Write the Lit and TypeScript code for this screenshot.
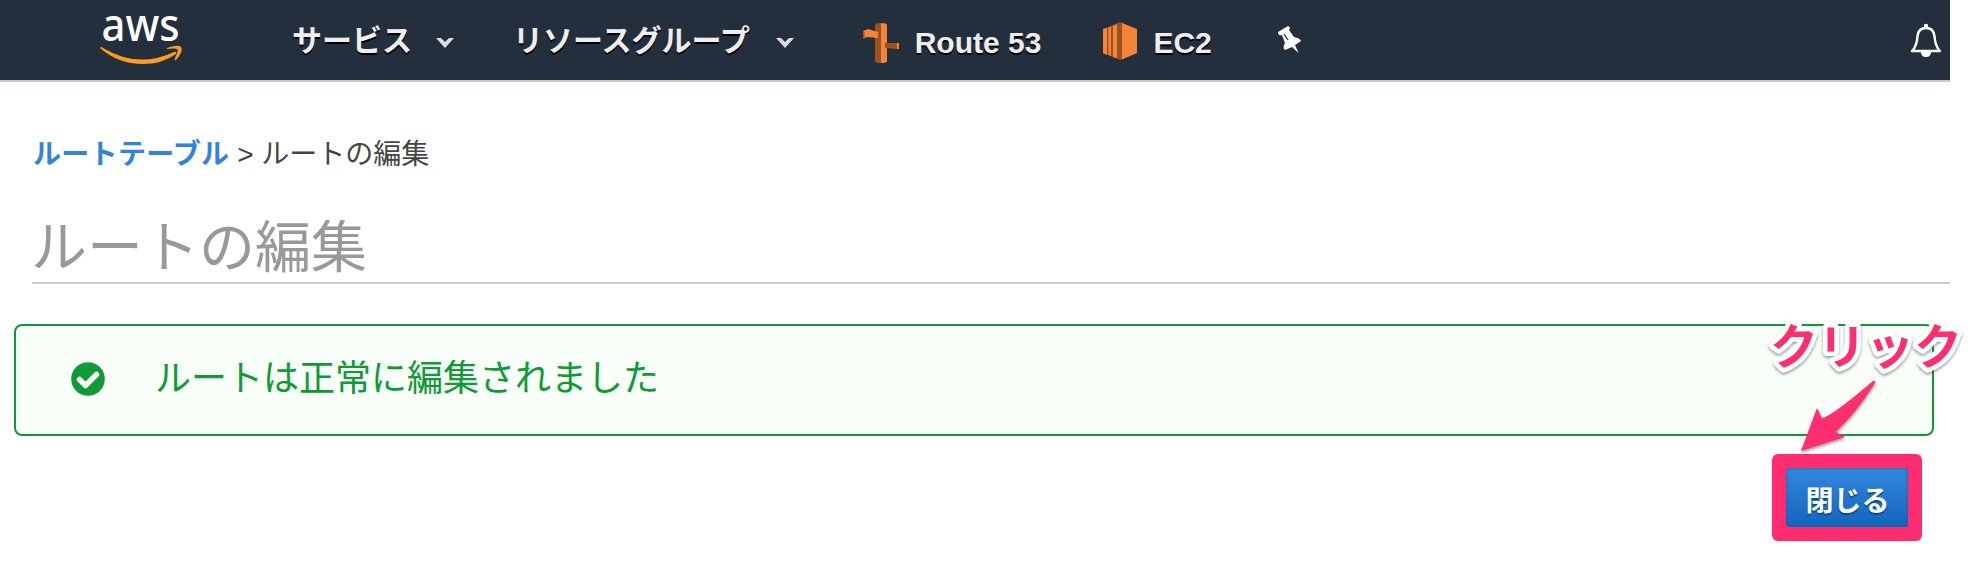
import { LitElement, html, css } from "lit";
import { customElement } from "lit/decorators.js";

@customElement("app-root")
class AppRoot extends LitElement {
  static styles = css`
    :host { display: block; position: relative; width: 1984px; height: 568px; background: #fff; overflow: hidden;
      font-family: "Liberation Sans", "Noto Sans CJK JP", sans-serif; }
    * { box-sizing: border-box; }
    svg { display: block; flex: none; overflow: visible; }
    header { width: 1950px; height: 82px; background: #242f3d; border-bottom: 2px solid #c8c8c8; display: flex; align-items: center; padding: 0 8px 0 100px; }
    .nav { font-size: 30px; line-height: 40px; font-weight: 700; color: #eee; text-shadow: 0 2px 0 #000; white-space: nowrap; padding-top: 2px; }
    .logo { margin-right: 108px; }
    .chev { margin: 5px 0 0 23px; }
    .group { margin-left: 58px; }
    .group + .chev { margin-left: 25px; }
    .route { margin: 5px 16px 0 68px; }
    .latin { padding-top: 6px; }
    .cube { margin: 1px 16px 0 62px; }
    .pin { margin-left: 65px; }
    .bell { margin-left: auto; margin-top: 2px; }
    .crumbs { padding-left: 33px; margin-top: 53px; font-size: 28px; line-height: 40px; color: #444; white-space: nowrap; }
    .crumbs a { color: #3184dd; font-weight: 700; letter-spacing: .3px; }
    h1 { width: 1918px; margin: 37px 0 0 32px; height: 72px; border-bottom: 2px solid #ccc; font-size: 56px; line-height: 72px; font-weight: 400; color: #999; text-indent: -1px; }
    .msg { width: 1920px; height: 112px; margin: 40px 0 0 14px; border: 2px solid #109a35; border-radius: 8px; background: #f7fff8; color: #109a35; display: flex; align-items: center; padding: 0 0 3px 55px; gap: 50px; font-size: 36px; line-height: 50px; }
    .actions { width: 1922px; margin-top: 18px; display: flex; justify-content: flex-end; }
    .frame { width: 150px; height: 87px; background: #ff2d6f; border-radius: 6px; padding: 14px; display: flex; }
    button { flex: 1; border: 0; padding: 2px 0 0 1px; border-radius: 4px 1px 1px 4px; background: linear-gradient(#3287dd, #1266bb); box-shadow: inset 0 0 3px #0d5db0; color: #fff; font: 700 28px "Noto Sans CJK JP", sans-serif; text-shadow: 0 2px 1px #0b4a8c; }
    .note { position: absolute; left: 1765px; top: 310px; }
    .noteText { font: 700 48px/48px "Noto Sans CJK JP", sans-serif; }
    .logoText { font: 500 46px "Noto Sans", sans-serif; }
  `;
  chevron() {
    return html`<svg class="chev" width="20" height="12" viewBox="0 0 20 12"><path d="M1 1H6L10 5L14 1H19L10 11Z" fill="#ddd"/></svg>`;
  }
  render() {
    return html`
      <header>
        <svg class="logo" width="84" height="56" viewBox="0 0 84 56">
          <text class="logoText" x="1.500" y="29" textLength="78" lengthAdjust="spacingAndGlyphs" fill="#fff">aws</text>
          <path d="M0 36Q1 34 3 36Q38 57 74 40Q77 39 76 42Q62 52 43 52Q18 52 0 36Z" fill="#ff9a1e"/>
          <path d="M67 36Q78 32 81 35Q84 39 76 48Q74 49 75 46Q79 38 77 37Q75 36 67 37Z" fill="#ff9a1e"/>
        </svg>
        <span class="nav">サービス</span>${this.chevron()}
        <span class="nav group">リソースグループ</span>${this.chevron()}
        <svg class="route" width="36" height="40" viewBox="0 0 36 40">
          <path d="M12 2Q12 0 18 0V40Q12 40 12 38Z" fill="#9d5025"/><path d="M18 0Q24 0 24 2V38Q24 40 18 40Z" fill="#f58536"/>
          <path d="M0 8L5 6L15 9V15L4 14L0 16Z" fill="#f58536"/><path d="M0 8V16L1.500 15V9Z" fill="#9d5025"/>
          <path d="M22 20L35 20V26L22 25Z" fill="#9d5025"/><path d="M34 20H36V26H34Z" fill="#f58536"/>
        </svg>
        <span class="nav latin">Route 53</span>
        <svg class="cube" width="34" height="38" viewBox="0 0 34 38">
          <path d="M0 7L17 0L21 1.500V36.500L17 38L0 31Z" fill="#9d5025"/><path d="M19 1L34 7V31L19 37.500Z" fill="#f58536"/>
          <path d="M0 7L4 6V33L0 31ZM5.500 6L8 4.500V34L5.500 33ZM10 4L14 2.500V36L10 35Z" fill="#f58536"/>
        </svg>
        <span class="nav latin">EC2</span>
        <svg class="pin" width="26" height="28" viewBox="0 0 26 28">
          <path d="M1 6L11 0Q14 1 12 4L17 11Q23 12 24 15L18 19L21.500 27L15 21L8 24Q5 22 8 17L5 9Q1 10 1 6Z" fill="#fff"/><path d="M7 8L11 14" stroke="#242f3d" stroke-width="1.3"/>
        </svg>
        <svg class="bell" width="32" height="36" viewBox="0 0 32 36">
          <circle cx="16" cy="3" r="2.200" fill="#fff"/><path d="M2 28Q7 23 7.500 13Q8.500 5 16 5Q23.500 5 24.500 13Q25 23 30 28Z" fill="none" stroke="#fff" stroke-width="2.400" stroke-linejoin="round"/>
          <path d="M11 29H21Q21 34 16 34Q11 34 11 29Z" fill="#fff"/>
        </svg>
      </header>
      <nav class="crumbs"><a>ルートテーブル</a> &gt; ルートの編集</nav>
      <h1>ルートの編集</h1>
      <div class="msg">
        <svg width="34" height="34" viewBox="0 0 34 34"><circle cx="17" cy="17" r="16.800" fill="#109a35"/><path d="M8.500 17.500L14.500 23.500L25.500 12.500" fill="none" stroke="#fff" stroke-width="5.500" stroke-linecap="round" stroke-linejoin="round"/></svg>
        <span>ルートは正常に編集されました</span>
      </div>
      <div class="actions"><div class="frame"><button>閉じる</button></div></div>
      <svg class="note" width="215" height="150" viewBox="0 0 215 150">
        <defs><filter id="sh" x="-10%" y="-10%" width="120%" height="130%"><feDropShadow dx="0" dy="2" stdDeviation="1.500" flood-opacity=".4"/></filter></defs>
        <g filter="url(#sh)"><text class="noteText" x="5" y="53.500" fill="#ff2d6f" stroke="#fff" stroke-width="9" stroke-linejoin="round" paint-order="stroke">クリック</text></g>
        <path filter="url(#sh)" d="M108 71Q111 70 110 73Q92 102 71 122L80 127L36 141L52 98L57 108Q66 107 108 71Z" fill="#ff2d6f"/>
      </svg>`;
  }
}
